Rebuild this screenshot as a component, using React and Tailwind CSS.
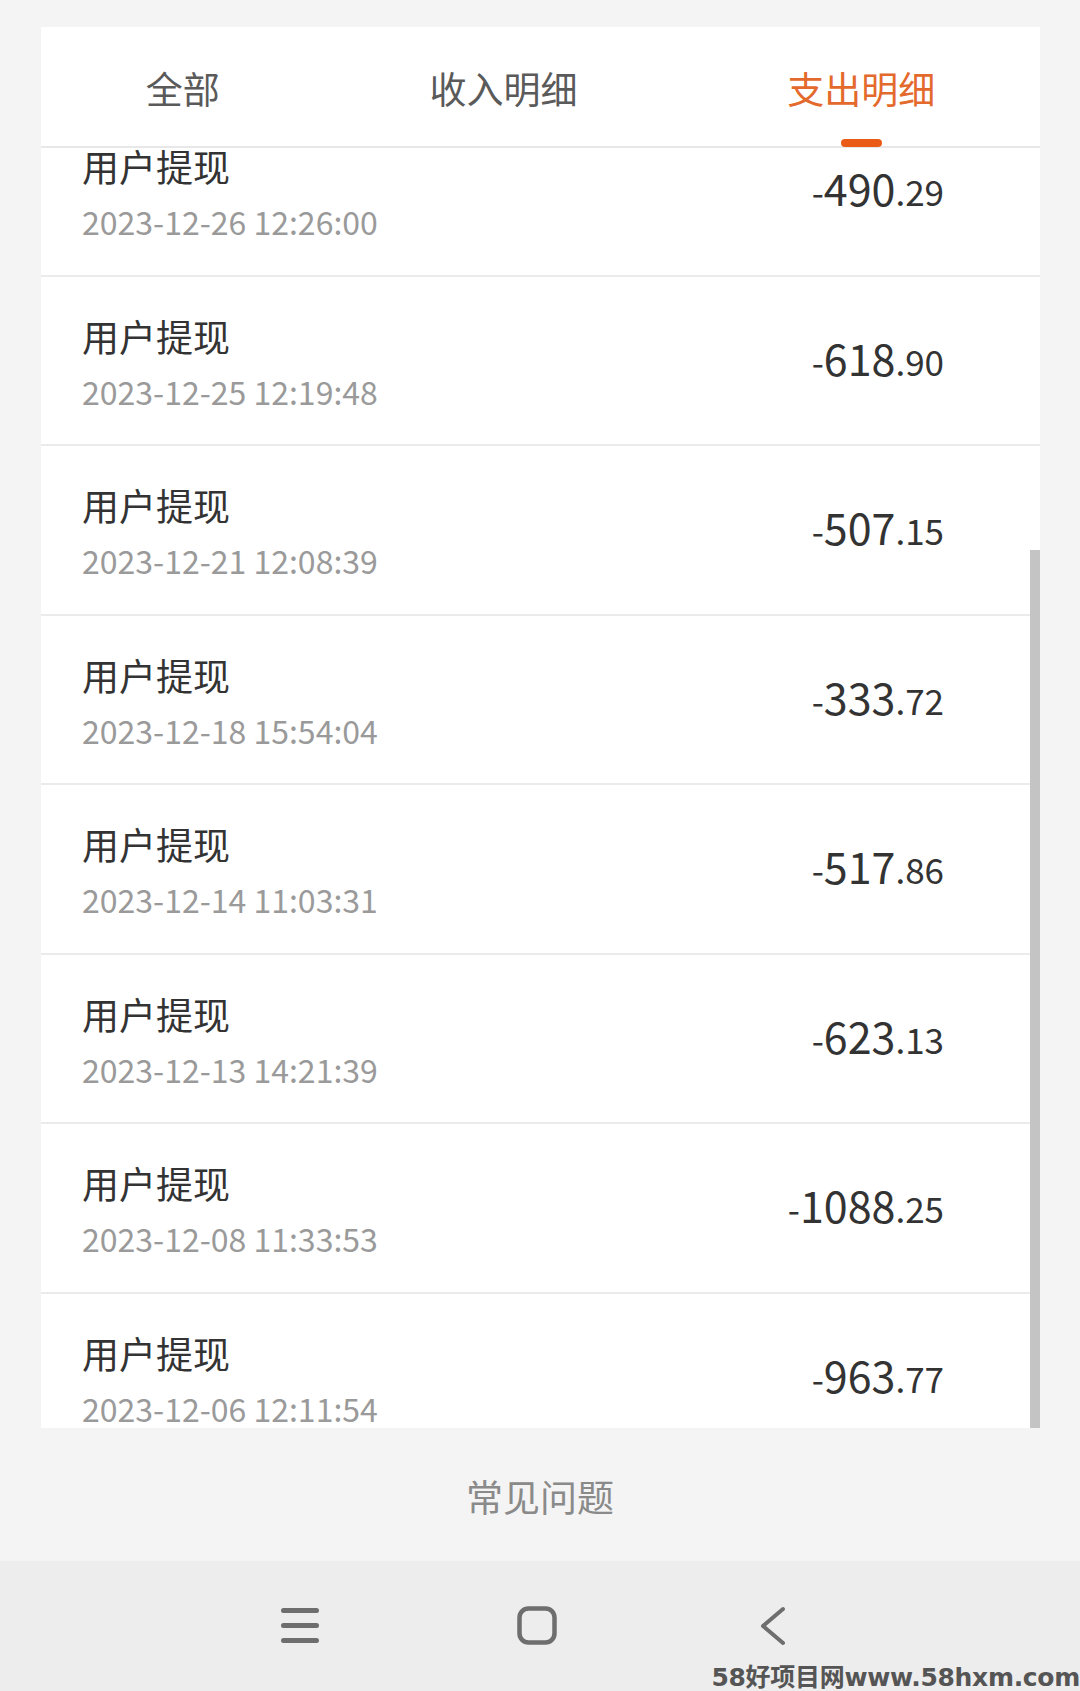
import React from "react";

const rows = [
  { date: "2023-12-26 12:26:00", whole: "490", cents: "29" },
  { date: "2023-12-25 12:19:48", whole: "618", cents: "90" },
  { date: "2023-12-21 12:08:39", whole: "507", cents: "15" },
  { date: "2023-12-18 15:54:04", whole: "333", cents: "72" },
  { date: "2023-12-14 11:03:31", whole: "517", cents: "86" },
  { date: "2023-12-13 14:21:39", whole: "623", cents: "13" },
  { date: "2023-12-08 11:33:53", whole: "1088", cents: "25" },
  { date: "2023-12-06 12:11:54", whole: "963", cents: "77" },
];

const tabs = ["全部", "收入明细", "支出明细"];

const RecordRow = ({ item }) => (
  <div className="h-[169.5px] border-b-2 border-[#ebebeb] flex items-start justify-between pl-[41px] pr-[96px]">
    <div className="flex flex-col pt-[37px]">
      <span className="text-[37px] leading-[44px] text-[#333333]">用户提现</span>
      <span className="text-[32px] leading-[36px] text-[#9a9a9a] mt-[15px]">{item.date}</span>
    </div>
    <div className="flex items-baseline text-[#333333] pt-[59px]">
      <span className="text-[35px] leading-none">-</span>
      <span className="text-[43px] leading-none">{item.whole}</span>
      <span className="text-[35px] leading-none">.{item.cents}</span>
    </div>
  </div>
);

export default function App() {
  return (
    <div
      className="w-[1080px] h-[1691px] bg-[#f4f4f4] flex flex-col relative overflow-hidden"
      style={{ fontFamily: '"Noto Sans CJK SC", "Noto Sans", sans-serif' }}
    >
      {/* card */}
      <div className="pt-[27px] pl-[41px] pr-[40px]">
        <div className="bg-white">
          {/* tabs */}
          <div className="h-[121px] border-b-2 border-[#e8e8e8] flex justify-around">
            {tabs.map((t, i) => (
              <div key={t} className="flex flex-col items-center h-full pt-[39px]">
                <span
                  className={
                    i === 2
                      ? "text-[37px] leading-[44px] text-[#e4692c]"
                      : "text-[37px] leading-[44px] text-[#5a5a5a]"
                  }
                >
                  {t}
                </span>
                {i === 2 && <div className="mt-auto mb-[-1px] w-[41px] h-[8px] rounded-full bg-[#ea5b17]" />}
              </div>
            ))}
          </div>

          {/* list */}
          <div className="h-[1280px] overflow-hidden relative">
            <div className="-mt-[41px]">
              {rows.map((r) => (
                <RecordRow key={r.date} item={r} />
              ))}
            </div>
            <div className="absolute right-0 top-[402px] bottom-0 w-[10px] bg-[#c4c4c4]" />
          </div>
        </div>
      </div>

      {/* faq */}
      <div className="h-[133px] flex items-center justify-center pt-[4px]">
        <span className="text-[37px] text-[#8a8a8a]">常见问题</span>
      </div>

      {/* system nav bar */}
      <div className="flex-1 bg-[#ededed] flex items-start pt-[45px] pl-[280px]">
        <svg width="40" height="40" viewBox="0 0 40 40" fill="none" stroke="#6e6e6e" strokeWidth="5" strokeLinecap="round">
          <path d="M3.5 4.5h33M3.5 19.5h33M3.5 34.5h33" />
        </svg>
        <svg className="ml-[197px]" width="40" height="40" viewBox="0 0 40 40" fill="none" stroke="#6e6e6e" strokeWidth="4.5">
          <rect x="2.5" y="2.5" width="35" height="34" rx="9" />
        </svg>
        <svg className="ml-[202px]" width="28" height="40" viewBox="0 0 28 40" fill="none" stroke="#6e6e6e" strokeWidth="4" strokeLinecap="round" strokeLinejoin="round">
          <path d="M24 3L4 20l20 17" />
        </svg>
      </div>

      {/* watermark */}
      <div
        className="absolute right-0 bottom-0 text-[25px] font-bold leading-[27px] tracking-[-0.3px] text-[#555555] whitespace-nowrap"
        style={{ fontFamily: '"DejaVu Sans", "Noto Sans CJK SC", sans-serif' }}
      >
        58好项目网www.58hxm.com
      </div>
    </div>
  );
}
